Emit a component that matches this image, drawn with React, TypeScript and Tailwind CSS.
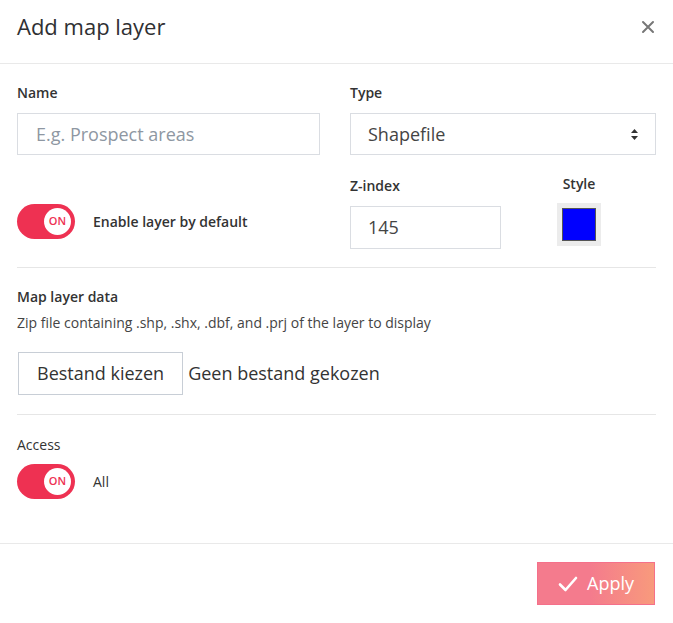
function Toggle() {
  return (
    <div className="relative w-[58px] h-[35px] rounded-full bg-[#ee3152] shrink-0">
      <div className="absolute right-[4px] top-[4px] w-[27px] h-[27px] rounded-full bg-white flex items-center justify-center text-[11px] font-semibold text-[#ee3152]">
        ON
      </div>
    </div>
  );
}

export default function App() {
  return (
    <div className="w-[673px] h-[623px] bg-white text-[#333] font-['Open_Sans',sans-serif]">
      {/* header */}
      <div className="h-[64px] flex items-start justify-between pl-[17px] pr-[18px] pt-[9px] border-b border-[#e9e9e9]">
        <h2 className="text-[22px] leading-[34px] text-[#2f3033]">Add map layer</h2>
        <svg width="14" height="14" viewBox="0 0 14 14" className="text-[#777] mt-[11px]">
          <path d="M2 2 L12 12 M12 2 L2 12" stroke="currentColor" strokeWidth="2" strokeLinecap="round" />
        </svg>
      </div>

      <div className="px-[17px]">
        {/* name / type */}
        <div className="grid grid-cols-[303px_1fr] gap-x-[30px] pt-[18px]">
          <div>
            <div className="text-[14px] font-semibold text-[#333] leading-[22px]">Name</div>
            <div className="mt-[9px] h-[42px] border border-[#dadde2] flex items-center px-[18px] text-[18px] text-[#8e97a2]">
              E.g. Prospect areas
            </div>
          </div>
          <div>
            <div className="text-[14px] font-semibold text-[#333] leading-[22px]">Type</div>
            <div className="mt-[9px] h-[42px] border border-[#dadde2] flex items-center justify-between pl-[17px] pr-[16px] text-[18px] text-[#444]">
              <span>Shapefile</span>
              <svg width="9" height="13" viewBox="0 0 9 13">
                <path d="M4.5 1 L8 5 L1 5 Z M4.5 12 L8 8 L1 8 Z" fill="#333" />
              </svg>
            </div>
          </div>
        </div>

        {/* toggle / z-index / style */}
        <div className="grid grid-cols-[303px_1fr] gap-x-[30px] mt-[20px] pb-[18px] border-b border-[#e6e6e6]">
          <div className="flex items-center gap-[18px] pt-[19px]">
            <Toggle />
            <span className="text-[14px] font-semibold text-[#333]">Enable layer by default</span>
          </div>
          <div className="flex items-start">
            <div className="w-[151px]">
              <div className="text-[14px] font-semibold leading-[22px]">Z-index</div>
              <div className="mt-[9px] h-[43px] border border-[#dadde2] flex items-center px-[17px] text-[18px] text-[#444]">
                145
              </div>
            </div>
            <div className="ml-[56px] flex flex-col items-center">
              <div className="text-[14px] font-semibold leading-[22px] -mt-[2px]">Style</div>
              <div className="mt-[8px] w-[44px] h-[43px] bg-[#ececec] flex items-center justify-center">
                <div className="w-[34px] h-[33px] bg-[#0000ff] border border-[#555]" />
              </div>
            </div>
          </div>
        </div>

        {/* map layer data */}
        <div className="pt-[18px] pb-[19px] border-b border-[#e6e6e6]">
          <div className="text-[14px] font-semibold leading-[22px]">Map layer data</div>
          <div className="text-[14px] leading-[20px] text-[#444] mt-[5px]">
            Zip file containing .shp, .shx, .dbf, and .prj of the layer to display
          </div>
          <div className="flex items-center mt-[19px]">
            <div className="h-[43px] px-[18px] ml-[1px] border border-[#c8ced6] flex items-center text-[18px] text-[#333]">
              Bestand kiezen
            </div>
            <span className="ml-[5px] text-[18px] text-[#333]">Geen bestand gekozen</span>
          </div>
        </div>

        {/* access */}
        <div className="pt-[19px] pb-[44px]">
          <div className="text-[14px] leading-[22px] text-[#333]">Access</div>
          <div className="flex items-center gap-[18px] mt-[8px]">
            <Toggle />
            <span className="text-[14px] font-medium">All</span>
          </div>
        </div>
      </div>

      {/* footer */}
      <div className="border-t border-[#e9e9e9] flex justify-end pr-[18px] pt-[18px]">
        <button className="w-[118px] h-[43px] flex items-center justify-center gap-[9px] text-white text-[18px] bg-[linear-gradient(90deg,#f47b8d_0%,#f47b8d_45%,#f89a7c_100%)] border border-[#f5708a]">
          <svg width="20" height="16" viewBox="0 0 20 16">
            <path d="M2 8.5 L7.5 14 L18 2" stroke="white" strokeWidth="2.6" fill="none" strokeLinecap="round" strokeLinejoin="round" />
          </svg>
          Apply
        </button>
      </div>
    </div>
  );
}
